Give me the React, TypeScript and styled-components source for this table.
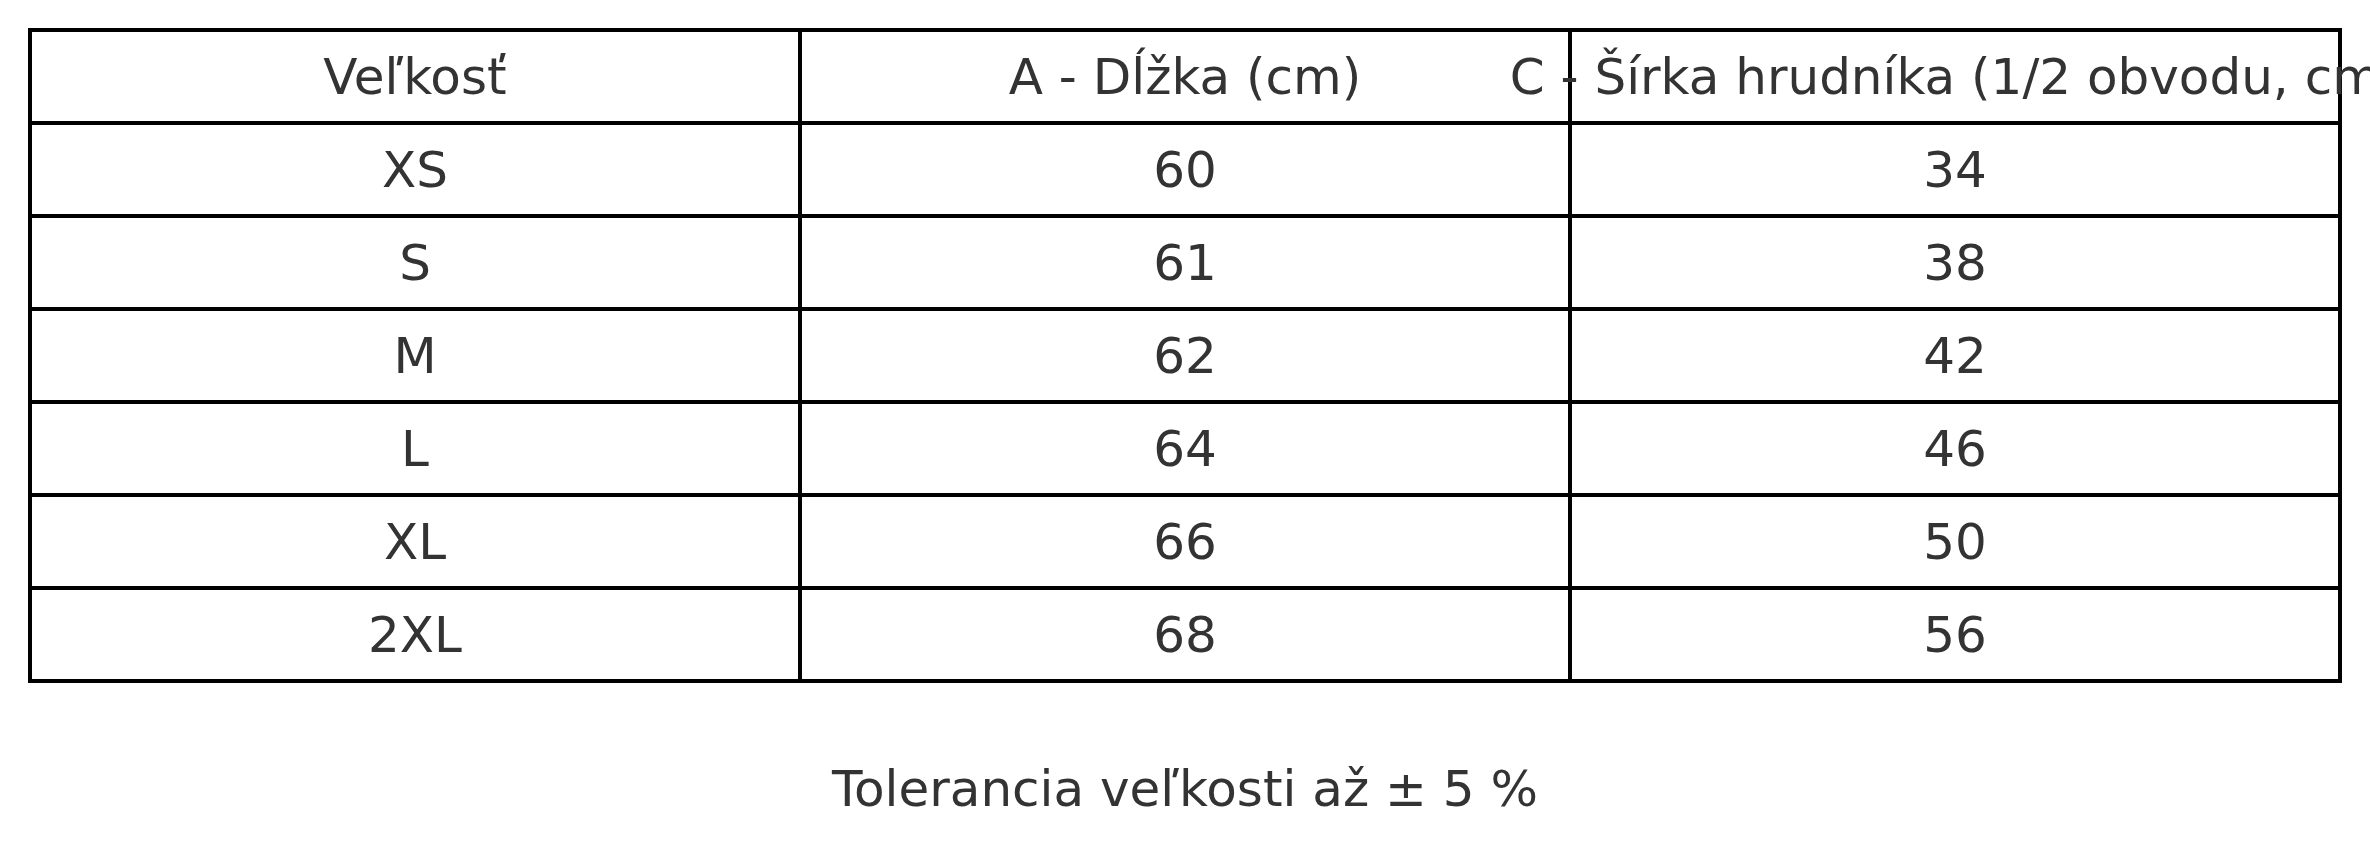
import React from "react";
import styled, { createGlobalStyle } from "styled-components";

const Global = createGlobalStyle`
  html, body {
    margin: 0;
    padding: 0;
    background: #ffffff;
    overflow: hidden;
  }
  body {
    font-family: "DejaVu Sans", "Liberation Sans", sans-serif;
    color: #333333;
  }
`;

const Page = styled.div`
  padding: 28px 0 0 28px;
  width: 2314px;
`;

const Grid = styled.div`
  display: grid;
  grid-template-columns: repeat(3, 766px);
  grid-auto-rows: 89px;
  gap: 4px;
  padding: 4px;
  background: #000000;
  width: max-content;
`;

const Cell = styled.div`
  background: #ffffff;
  display: flex;
  align-items: center;
  justify-content: center;
  white-space: nowrap;
  font-size: 50px;
  color: #333333;
  min-width: 0;
`;

const Note = styled.div`
  margin-top: 77px;
  text-align: center;
  font-size: 50px;
  color: #333333;
  white-space: nowrap;
`;

const headers = ["Veľkosť", "A - Dĺžka (cm)", "C - Šírka hrudníka (1/2 obvodu, cm)"];

const rows: [string, string, string][] = [
  ["XS", "60", "34"],
  ["S", "61", "38"],
  ["M", "62", "42"],
  ["L", "64", "46"],
  ["XL", "66", "50"],
  ["2XL", "68", "56"],
];

export default function App() {
  return (
    <>
      <Global />
      <Page>
        <Grid>
          {headers.map((h) => (
            <Cell key={h}>{h}</Cell>
          ))}
          {rows.map((r) =>
            r.map((v, i) => <Cell key={r[0] + i}>{v}</Cell>)
          )}
        </Grid>
        <Note>Tolerancia veľkosti až ± 5 %</Note>
      </Page>
    </>
  );
}
